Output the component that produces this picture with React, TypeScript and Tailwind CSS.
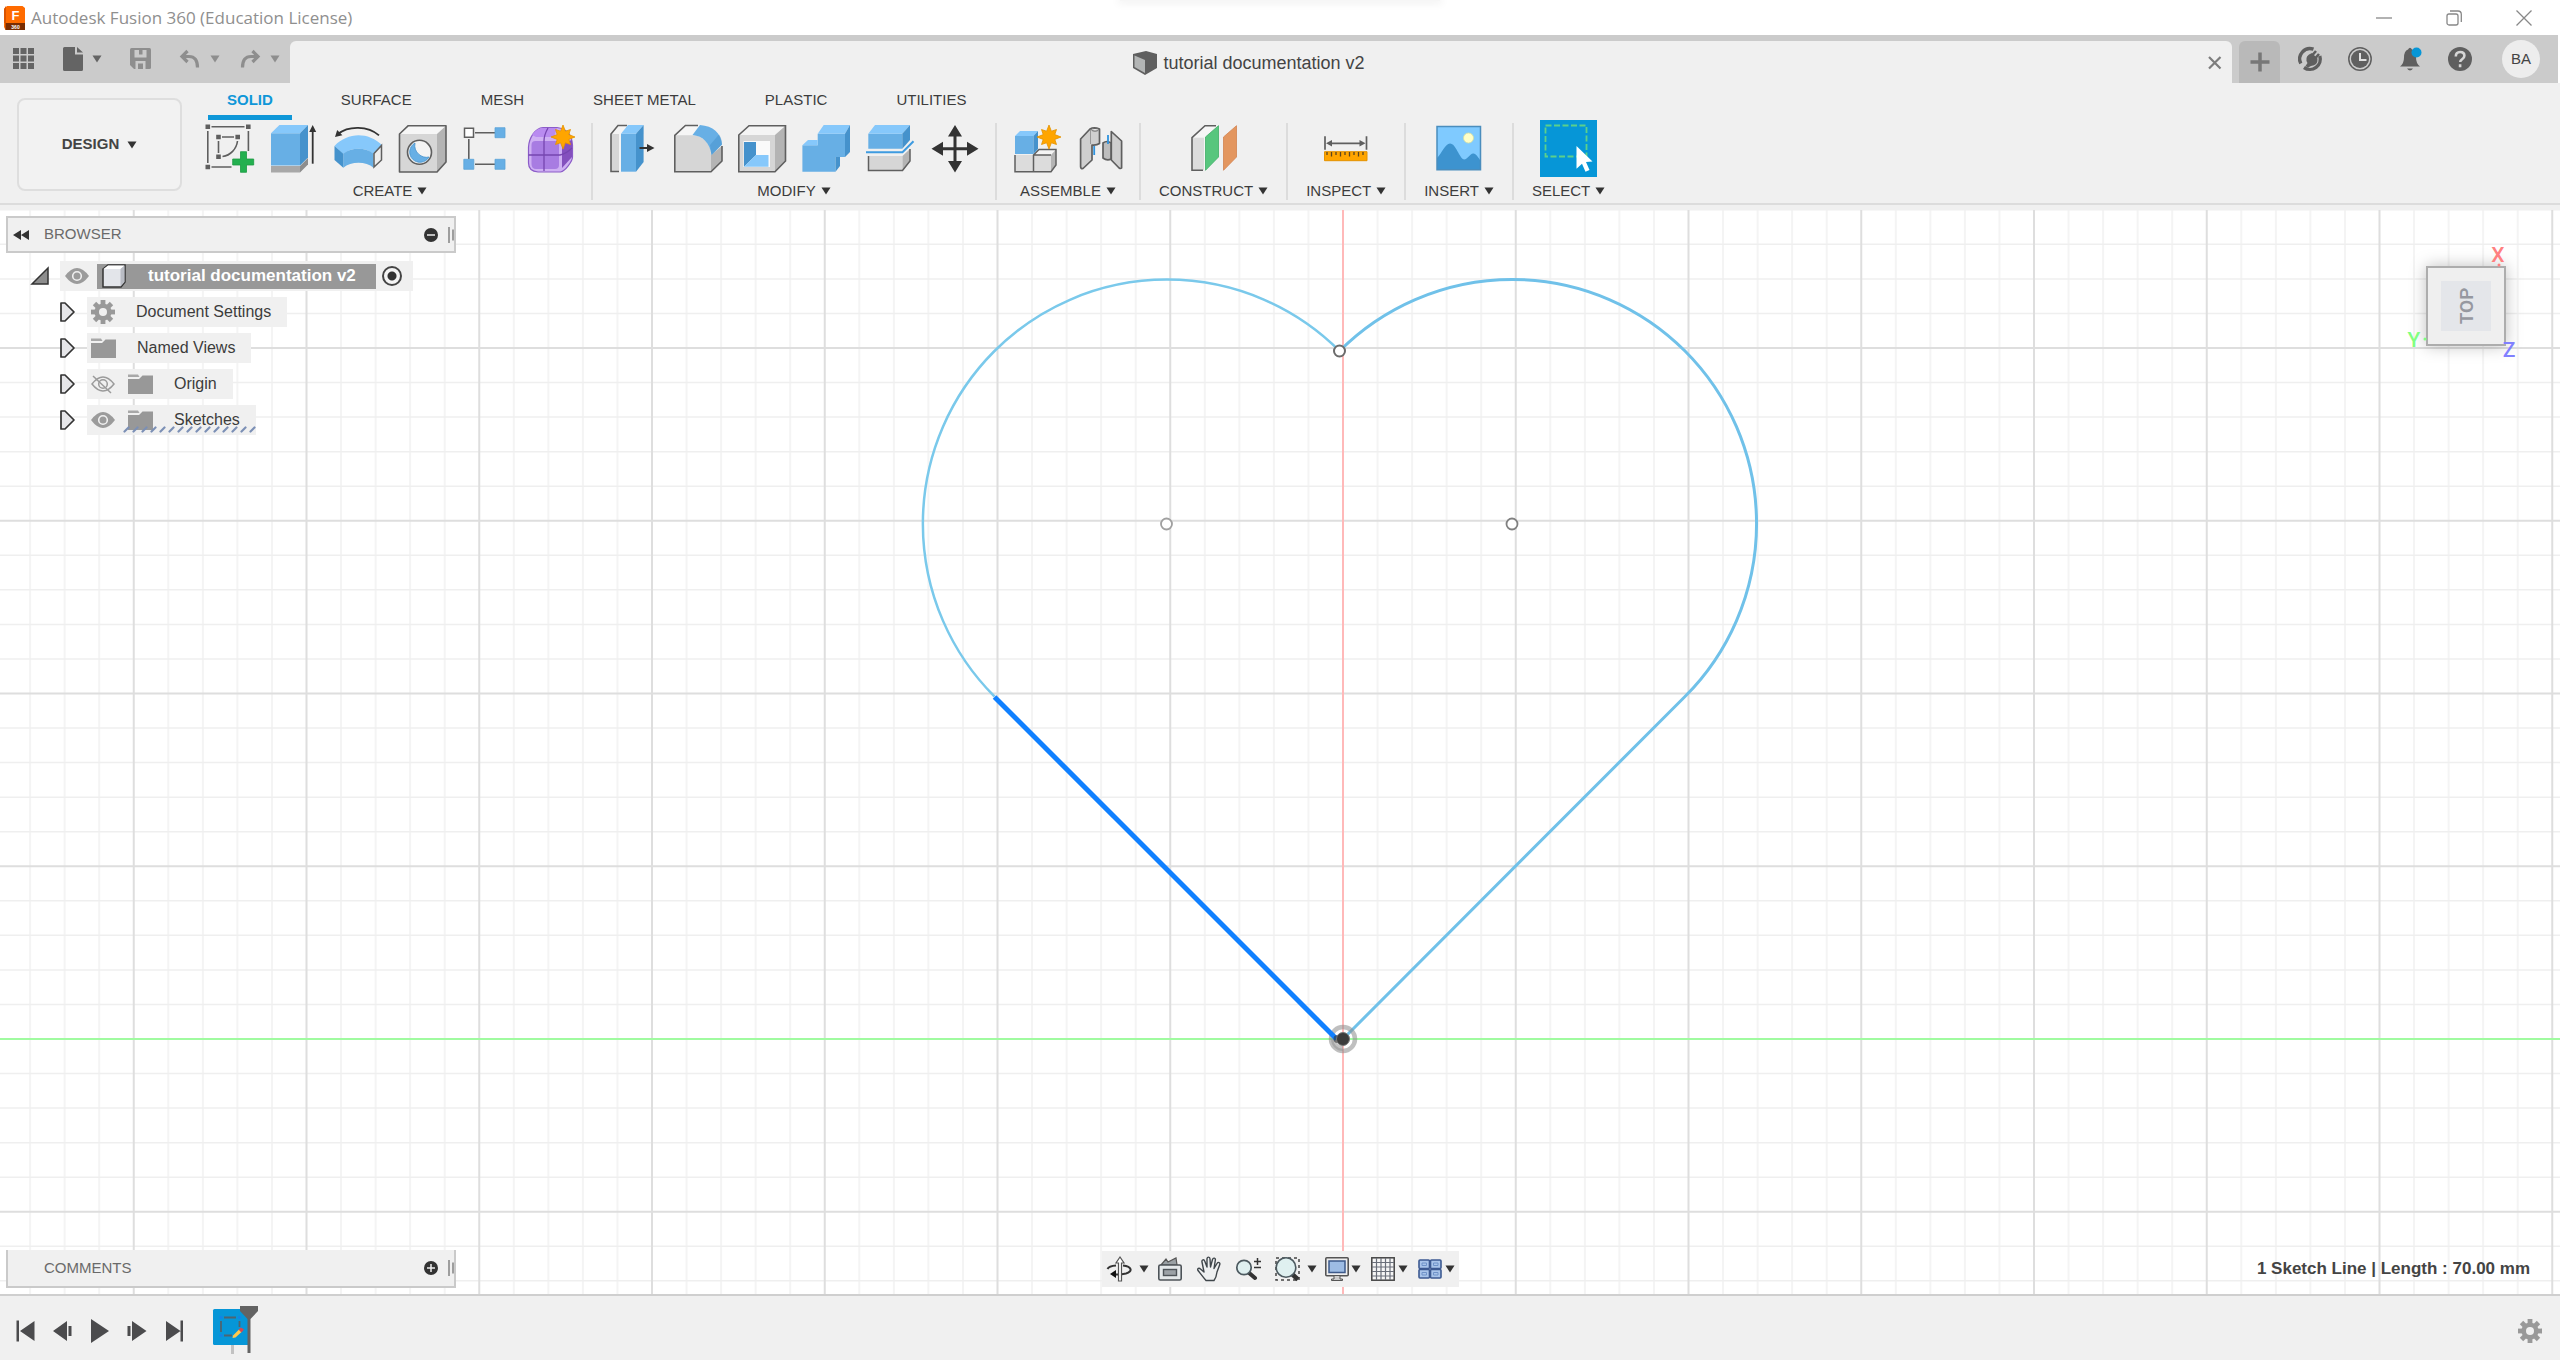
import React from "react";

type Kids = { children?: React.ReactNode };

const Icon = ({ w = 48, h = 48, children }: Kids & { w?: number; h?: number }) => (
  <svg width={w} height={h} viewBox={`0 0 ${w} ${h}`} fill="none" className="shrink-0 overflow-visible" aria-hidden="true">
    {children}
  </svg>
);

const Caret = ({ color = "#333" }: { color?: string }) => (
  <Icon w={10} h={8}>
    <path d="M0.5 0.5h9L5 7.5z" fill={color} />
  </Icon>
);

const G = "#5f5f5f";
const BLUE = "#67afe5";
const LBLUE = "#86c8fb";
const DBLUE = "#4592cc";

const starPoints = (cx: number, cy: number, r: number) =>
  Array.from({ length: 16 }, (_, i) => {
    const a = (i * Math.PI) / 8 - Math.PI / 2;
    const q = i % 2 ? r * 0.52 : i % 4 ? r * 0.88 : r;
    return `${(cx + q * Math.cos(a)).toFixed(1)},${(cy + q * Math.sin(a)).toFixed(1)}`;
  }).join(" ");

const Star = ({ x, y }: { x: number; y: number }) => <polygon points={starPoints(x, y, 12)} fill="#ffa500" stroke="#e39200" strokeWidth="0.8" />;

const Gear = () => (
  <Icon w={24} h={24}>
    <g fill="#999">
      {[0, 45, 90, 135].map((a) => (
        <path key={a} d="M9.6 0h4.8v24H9.6z" transform={`rotate(${a} 12 12)`} />
      ))}
      <circle cx="12" cy="12" r="8.6" />
    </g>
    <circle cx="12" cy="12" r="4" fill="#f0f0f0" />
  </Icon>
);

const SketchIcon = () => (
  <Icon>
    <g stroke={G} strokeWidth="1.6">
      <path d="M5.500 1.700h33M1.800 6v32M42.400 6v20M5.500 42h20M16 12h12M12.500 16v12M31.500 16c-1 8-7 14.500-15 15.500" />
    </g>
    <g fill={G}>
      <path d="M-.5-.6h4.600v4.600H-.5zM40-.6h4.600v4.600H40zM-.5 39.700h4.600v4.600H-.5zM10.200 9.700h4.600v4.600h-4.600zM29.400 9.700h4.600v4.600h-4.600zM10.200 29.400h4.600V34h-4.600z" />
    </g>
    <path d="M34.500 26.700h6v7.300h7.200v6h-7.200v7.300h-6V40h-7.800v-6h7.800z" fill="#23b04f" stroke="#1c9a43" strokeWidth=".8" />
  </Icon>
);

const ExtrudeIcon = () => (
  <Icon>
    <path d="M1 41h29v6.500H1z" fill="#a8a8a8" />
    <path d="M30 41l8-8v6.500l-8 8z" fill="#8d8d8d" />
    <path d="M1 8.300h29v32.200H1z" fill={BLUE} />
    <path d="M1 8.300L9.400 0H38l-8 8.300z" fill={LBLUE} />
    <path d="M30 8.300L38 0v32.500l-8 8z" fill={DBLUE} />
    <path d="M42.700 5v33.700" stroke="#333" strokeWidth="1.800" />
    <path d="M42.700 0l3.500 7h-7z" fill="#333" />
  </Icon>
);

const RevolveIcon = () => (
  <Icon>
    <path d="M4 9C14 .5 34 .5 45 10.300" stroke="#333" strokeWidth="1.800" />
    <path d="M1 12l2.200-7 5.200 5.200z" fill="#333" />
    <path d="M.5 21C14 7 34 7 48 20l-8.500 9C32 22 17 22 9.300 29z" fill={LBLUE} />
    <path d="M9.300 28.700C17 22 32 22 39.500 28.700v14C32 36 17 36 9.300 42.700z" fill={BLUE} />
    <path d="M.5 21l8.800 7.700v14L.5 35z" fill={DBLUE} />
    <path d="M40 28.500l7.500-8v14.500L40 42z" fill="#eee" stroke={G} strokeWidth="1.500" />
  </Icon>
);

const HoleIcon = () => (
  <Icon>
    <path d="M1.500 9l8.800-8.300H48L39 9z" fill="#f6f6f6" />
    <path d="M39 9l9-8.300V37l-9 10z" fill="#b4b4b4" />
    <path d="M1.500 9H39v38H1.500z" fill="#d6d6d6" />
    <path d="M1.500 9l8.800-8.300H48V37l-9 10H1.500z" stroke={G} strokeWidth="1.600" strokeLinejoin="round" />
    <circle cx="21.500" cy="27.300" r="12" fill="#f4f4f4" stroke={G} strokeWidth="1.600" />
    <path d="M17 18a10.300 10.300 0 1 0 14 14C24 34 15 27 17 18z" fill={BLUE} stroke={DBLUE} strokeWidth=".8" />
  </Icon>
);

const PatternIcon = () => (
  <Icon>
    <path d="M13 7.700h20M6.800 14v20M13 39.300h20" stroke={G} strokeWidth="1.600" />
    <path d="M2.500 3.200h9v9h-9z" fill="#fff" stroke={G} strokeWidth="1.500" />
    <path d="M33 2.700h10v10H33zM1.800 34.300h10v10h-10zM33 34.300h10v10H33z" fill={BLUE} stroke="#5ca3d8" strokeWidth=".8" />
  </Icon>
);

const FormIcon = () => (
  <Icon>
    <path d="M2.500 22C3 13 9 3 17 2.500h14C42 4 46 10 46.500 20v12c0 4-7 14-12 15H12C6 46.500 2.500 44 2.500 38z" fill="#cfb0f3" stroke="#8b5cc8" strokeWidth="1.200" />
    <path d="M36 18l10-3v17l-10 11z" fill="#8450be" />
    <path d="M6 10C10 4 14 3 18 3h13l-3 9H10z" fill="#b98bf0" />
    <path d="M5.500 20q0-4 4-4H29q4 0 4 4v20q0 4-4 4H10q-4.500 0-4.500-5z" fill="#a87ce2" />
    <path d="M2.500 30H34q6-1 12-7M18 46V16q0-6 4-13" stroke="#7645b0" strokeWidth="1.300" />
    <Star x={37} y={12} />
  </Icon>
);

const PressPullIcon = () => (
  <Icon>
    <path d="M1 9l7-8.500h10L11 9v37.500H1z" fill="#f4f4f4" />
    <path d="M1 9h8v37.500H1z" fill="#d6d6d6" />
    <path d="M17 .5H8L1 9v37.500h8" stroke={G} strokeWidth="1.600" />
    <path d="M11 8.700h15v38H11z" fill={BLUE} />
    <path d="M11 8.700L18 0h15.600L26 8.700z" fill={LBLUE} />
    <path d="M26 8.700L33.600 0v37L26 46.700z" fill={DBLUE} />
    <path d="M29.500 23H38" stroke="#333" strokeWidth="2" />
    <path d="M37 19l7.500 4-7.500 4z" fill="#333" />
  </Icon>
);

const FilletIcon = () => (
  <Icon>
    <path d="M.8 10.300L11.400.5H25l-6.500 9.800z" fill="#f6f6f6" />
    <path d="M.8 10.300h17.700C30 11 37 19 37 30v16.700H.8z" fill="#d6d6d6" />
    <path d="M37 30l11-9v15L37 46.700z" fill="#b4b4b4" />
    <path d="M24 .5H11.400L.8 10.300v36.400H37L48 36V21" stroke={G} strokeWidth="1.600" />
    <path d="M18.500 10L26 0c13 1 21 8 22 19.500L37.500 30C36 18 29 11 18.500 10z" fill={BLUE} />
    <path d="M37.500 30L48 19.500c0-4-1-7-3-10L36 20z" fill={DBLUE} opacity=".5" />
  </Icon>
);

const ShellIcon = () => (
  <Icon>
    <path d="M.8 10L11 .7h36.500L37 10z" fill="#f4f4f4" />
    <path d="M37 10L47.500.7V36L37 46.700z" fill="#b4b4b4" />
    <path d="M.8 10H37v36.700H.8z" fill="#d6d6d6" />
    <path d="M.8 10L11 .7h36.500V36L37 46.700H.8z" stroke={G} strokeWidth="1.600" />
    <path d="M5.500 16H32v26H5.500z" fill="#fafafa" />
    <path d="M6 17h12v13L6 41.700z" fill={DBLUE} />
    <path d="M6 41.700L18 30h12.500v11.700z" fill={LBLUE} />
  </Icon>
);

const CombineIcon = () => (
  <Icon>
    <path d="M15.700 8.700H43V32H33.500v14.700H.4V20.300h15.300z" fill={BLUE} />
    <path d="M15.700 8.700l6-8.700H48l-5 8.700zM.4 20.300L6 15h9.700v5.300z" fill={LBLUE} />
    <path d="M43 8.700L48 0v27l-5 5zM33.500 32H38v9l-4.500 5.700z" fill={DBLUE} />
  </Icon>
);

const SplitIcon = () => (
  <Icon>
    <path d="M2.300 8.700h34v15h-34z" fill={BLUE} />
    <path d="M2.300 8.700L9 0h35l-7.700 8.700z" fill={LBLUE} />
    <path d="M36.300 8.700L44 0v15l-7.700 8.700z" fill={DBLUE} />
    <path d="M0 27.300h36.500l11-11" stroke="#3e9be0" strokeWidth="2" />
    <path d="M2.500 31h34v14.500h-34z" fill="#d6d6d6" />
    <path d="M36.500 31l7.500-7v12l-7.500 9.500z" fill="#b4b4b4" />
    <path d="M2.500 31v14.500h34L44 36V24" stroke={G} strokeWidth="1.500" />
  </Icon>
);

const MoveIcon = () => (
  <Icon>
    <path d="M25 8v32M10 23.700h30" stroke="#333" strokeWidth="3" />
    <path d="M25 0l7 11.500H18zM25 47.500L18 36h14zM1.500 23.700L13 16.700v14zM48.500 23.700L37 16.700v14z" fill="#333" />
  </Icon>
);

const ComponentIcon = () => (
  <Icon>
    <path d="M1 30h18.500v16.700H1zM19.500 30H37v16.700H19.500z" fill="#dcdcdc" />
    <path d="M19.500 30l5.500-5.500h17L37 30z" fill="#f4f4f4" />
    <path d="M37 30l5-5.500V40l-5 6.700z" fill="#b4b4b4" />
    <path d="M1 30v16.700h36l5-6.700V24.500H25L19.500 30v16.700M19.500 30H37" stroke={G} strokeWidth="1.500" />
    <path d="M1 11h18.500v18H1z" fill={BLUE} />
    <path d="M1 11l5-5h18l-4.500 5z" fill={LBLUE} />
    <path d="M19.500 11L24 6v18l-4.500 5z" fill={DBLUE} />
    <Star x={35} y={12} />
  </Icon>
);

const JointIcon = () => (
  <Icon w={44}>
    <g stroke={G} strokeWidth="1.700" strokeLinejoin="round">
      <path d="M2.600 14L12 4q4-2.500 9.500 0v14.500q-3 2-7.500 1.500V35L5 43.500q-2.400.5-2.400-2z" fill="#cfcfcf" />
      <path d="M12.500 5v14" stroke="#999" strokeWidth="1" />
      <path d="M33.300 6.500l10.300 9.500v27q-1 1-2.500 0l-7.800-8z" fill="#cfcfcf" />
      <path d="M25 18q4-3 8 0v16q-4 2-8-1z" fill="#bdbdbd" />
      <ellipse cx="17" cy="4.800" rx="3.500" ry="1.300" fill="#eee" strokeWidth="1" />
    </g>
    <path d="M16.200 21v9M30 10v9" stroke="#2f93de" strokeWidth="1.800" />
  </Icon>
);

const ConstructIcon = () => (
  <Icon>
    <path d="M2 12.700L15 .7h12l-12 11v33.600H2z" fill="#f6f6f6" />
    <path d="M2 12.700h12v32.600H2z" fill="#dcdcdc" />
    <path d="M26 .7H15L2 12.700v32.600h11" stroke={G} strokeWidth="1.600" />
    <path d="M15.500 12L28.500.7V32l-13 13.300z" fill="#57c67d" stroke="#3fae66" strokeWidth=".8" />
    <path d="M33.500 12L46.500.7V32l-13 13.300z" fill="#e3965f" stroke="#d28350" strokeWidth=".8" />
  </Icon>
);

const InspectIcon = () => (
  <Icon>
    <path d="M3 11.300v13.400M44.500 11.300v13.400M8 18.300h32" stroke={G} strokeWidth="1.700" />
    <path d="M4 18.300l6-3.300v6.600zM43.500 18.300l-6-3.300v6.600z" fill={G} />
    <path d="M2.500 26.700h42.500v9H2.500z" fill="#ffa500" stroke="#e39200" />
    <path d="M5 27v3M9.500 27v4.500M14 27v3M18.500 27v4.500M23 27v3M27.500 27v4.500M32 27v3M36.500 27v4.500M41 27v3" stroke="#5a4520" strokeWidth="1.300" />
  </Icon>
);

const InsertIcon = () => (
  <Icon>
    <path d="M2 1.500h43.500v43.200H2z" fill="#7fcaff" />
    <circle cx="33.500" cy="13" r="5" fill="#ffffc8" stroke="#d8e0a0" strokeWidth=".8" />
    <path d="M2 33c5-5 8-14 13-14.500 6 0 9 14.500 14 16 4 0 6-6.500 9.500-6 2.500 0 5 4.500 7 7v9.200H2z" fill="#3d93cf" />
    <path d="M2 1.500h43.500v43.200H2z" stroke="#4a8dbd" strokeWidth="1.500" />
  </Icon>
);

const SelectIcon = () => (
  <span className="bg-[#0696d7]">
    <Icon w={57} h={57}>
      <path d="M5.500 5.500h41v31h-41z" stroke="#5cd08a" strokeWidth="1.800" strokeDasharray="6 2.500" />
      <path d="M36.500 26l16 15.500-6.500.5 3.500 8-4 1.800-3.500-8-5.500 5z" fill="#fff" />
    </Icon>
  </span>
);

const groups: { label: string; icons: [string, React.ReactNode][] }[] = [
  {
    label: "CREATE",
    icons: [
      ["Create Sketch", <SketchIcon />],
      ["Extrude", <ExtrudeIcon />],
      ["Revolve", <RevolveIcon />],
      ["Hole", <HoleIcon />],
      ["Rectangular Pattern", <PatternIcon />],
      ["Create Form", <FormIcon />],
    ],
  },
  {
    label: "MODIFY",
    icons: [
      ["Press Pull", <PressPullIcon />],
      ["Fillet", <FilletIcon />],
      ["Shell", <ShellIcon />],
      ["Combine", <CombineIcon />],
      ["Split Body", <SplitIcon />],
      ["Move", <MoveIcon />],
    ],
  },
  { label: "ASSEMBLE", icons: [["New Component", <ComponentIcon />], ["Joint", <JointIcon />]] },
  { label: "CONSTRUCT", icons: [["Offset Plane", <ConstructIcon />]] },
  { label: "INSPECT", icons: [["Measure", <InspectIcon />]] },
  { label: "INSERT", icons: [["Insert Image", <InsertIcon />]] },
  { label: "SELECT", icons: [["Select", <SelectIcon />]] },
];

const tabs = ["SOLID", "SURFACE", "MESH", "SHEET METAL", "PLASTIC", "UTILITIES"];

function TitleBar() {
  return (
    <header className="relative flex h-[35px] items-center bg-white pl-1 pr-7">
      <div className="absolute left-1/2 top-0 h-px w-[320px] -translate-x-1/2 bg-[#f6f6f6] shadow-[0_0_8px_2px_rgba(0,0,0,0.08)]" />
      <Icon w={21} h={24}>
        <path d="M3 0h15.500L21 2v18L18 24H1.500L0 21V3z" fill="#ff6b00" />
        <path d="M0 3l2-3v17H0z" fill="#d95400" />
        <path d="M1.500 17H21v7H1.500z" fill="#7a2c00" />
        <text x="11.500" y="13.500" fontSize="13" fontWeight="700" textAnchor="middle" fill="#fff" fontFamily="Liberation Sans, sans-serif">F</text>
        <text x="11.500" y="22.500" fontSize="5" fontWeight="700" textAnchor="middle" fill="#fff" fontFamily="Liberation Sans, sans-serif">360</text>
      </Icon>
      <span className="ml-1.5 font-['Open_Sans',sans-serif] text-[17px] leading-6 text-[#8f8f8f]">Autodesk Fusion 360 (Education License)</span>
      <div className="ml-auto flex items-center gap-[54px]">
        <button aria-label="Minimize">
          <Icon w={16} h={16}><path d="M0 8h16" stroke="#888" strokeWidth="1.300" /></Icon>
        </button>
        <button aria-label="Restore">
          <Icon w={16} h={16}>
            <rect x="1" y="4" width="11" height="11" rx="2" stroke="#888" strokeWidth="1.300" />
            <path d="M4 1h8q3.300 0 3.300 3.300V12" stroke="#888" strokeWidth="1.300" />
          </Icon>
        </button>
        <button aria-label="Close">
          <Icon w={16} h={16}><path d="M.5.5l15 15M15.500.5l-15 15" stroke="#888" strokeWidth="1.300" /></Icon>
        </button>
      </div>
    </header>
  );
}

function DocumentBar() {
  return (
    <div className="flex h-12 items-end border-r-2 border-white bg-[#cbcbcb]">
      <div className="flex h-[42px] w-[290px] shrink-0 items-center pb-1.5 pl-[13px]">
        <button aria-label="Data panel">
          <Icon w={22} h={22}>
            <path d="M0 0h6v6H0zM7.500 0h6v6h-6zM15 0h6v6h-6zM0 7.500h6v6H0zM7.500 7.500h6v6h-6zM15 7.500h6v6h-6zM0 15h6v6H0zM7.500 15h6v6h-6zM15 15h6v6h-6z" fill="#646464" />
          </Icon>
        </button>
        <button aria-label="File" className="ml-7 flex items-center gap-[9px]">
          <Icon w={20} h={24}><path d="M0 1.500Q0 0 1.500 0H12v7.500h8v15q0 1.500-1.500 1.500h-17Q0 24 0 22.500zM14 0l6 5.500h-6z" fill="#646464" /></Icon>
          <Caret color="#646464" />
        </button>
        <button aria-label="Save" className="ml-7">
          <Icon w={22} h={22}>
            <path d="M0 1.500Q0 0 1.500 0h18Q21 0 21 1.500v18q0 1.500-1.500 1.500H4L0 17z" fill="#8e8e8e" />
            <path d="M4.500 2h12v7.500h-12zM5.500 13h10v8h-10z" fill="#cbcbcb" />
            <path d="M9 2h3.500v4.500H9zM8 15.500h5V21H8z" fill="#8e8e8e" />
          </Icon>
        </button>
        <button aria-label="Undo" className="ml-7 flex items-center gap-[10px]">
          <Icon w={20} h={20}><path d="M7.500 2L2 7.500 7.500 13M2 7.500h7q8.500 0 8.500 11" stroke="#8e8e8e" strokeWidth="3.200" /></Icon>
          <Caret color="#8e8e8e" />
        </button>
        <button aria-label="Redo" className="ml-5 flex items-center gap-[10px]">
          <Icon w={20} h={20}><path d="M12.500 2L18 7.500 12.500 13M18 7.500h-7q-8.500 0-8.500 11" stroke="#8e8e8e" strokeWidth="3.200" /></Icon>
          <Caret color="#8e8e8e" />
        </button>
      </div>
      <div className="flex h-[42px] flex-1 items-center rounded-t-md bg-[#f0f0f0] pr-2.5 pt-px">
        <div className="flex flex-1 items-center justify-center gap-1.5">
          <Icon w={24} h={24}>
            <path d="M0 3L13 0l11 3v14l-12 7L0 17z" fill="#5f5f5f" />
            <path d="M1.500 4.500L12 9v13L1.500 16z" fill="#b3b5b5" />
          </Icon>
          <span className="text-[18px] leading-6 text-[#444]">tutorial documentation v2</span>
        </div>
        <button aria-label="Close document">
          <Icon w={14} h={14}><path d="M1 1l11.500 11.500M12.500 1L1 12.500" stroke="#7d7d7d" strokeWidth="2.200" /></Icon>
        </button>
      </div>
      <button aria-label="New document" className="ml-[7px] flex h-[42px] w-[41px] items-center justify-center rounded-t-md bg-[#b9b9b9]">
        <Icon w={20} h={20}><path d="M10 .5v19M.5 10h19" stroke="#777" strokeWidth="3.500" /></Icon>
      </button>
      <div className="flex h-[48px] items-center gap-[26px] pl-[18px] pr-[18px]">
        <button aria-label="Extensions">
          <Icon w={24} h={24}>
            <path d="M15.500 2.200A10.300 10.300 0 0 0 2.800 16.500M6 20.500A10.300 10.300 0 0 0 21.800 9" stroke="#5f5f5f" strokeWidth="3.400" />
            <path d="M7.500 19l2-3q-3-5 1.500-8.500l3-1.500 5.500 5.500q.5 7-6.500 7.500l-3 1.500z" fill="#5f5f5f" />
            <path d="M14.500 8l3.500-4M17.500 11l3.500-4" stroke="#5f5f5f" strokeWidth="2.600" />
          </Icon>
        </button>
        <button aria-label="Job status">
          <Icon w={24} h={24}>
            <circle cx="12" cy="12" r="11.200" stroke="#5f5f5f" strokeWidth="1.500" />
            <circle cx="12" cy="12" r="9" fill="#5f5f5f" />
            <path d="M12 6v7h6.500" stroke="#e0e0e0" strokeWidth="2" />
          </Icon>
        </button>
        <button aria-label="Notifications">
          <Icon w={24} h={24}>
            <path d="M2 19.500q4-3 4-9Q6 4 10 2.500q2-3.500 4 0 4 1.500 4 8 0 6 4 9zM9 21.500h6q-3 4-6 0z" fill="#5f5f5f" />
            <circle cx="18.500" cy="5.500" r="5" fill="#0696d7" />
          </Icon>
        </button>
        <button aria-label="Help">
          <Icon w={24} h={24}>
            <circle cx="12" cy="12" r="12" fill="#5f5f5f" />
            <path d="M7.800 9.500q0-4.500 4.300-4.500t4.300 3.800q0 2.200-2.400 3.500-1.800 1-1.800 2.700M12.100 17.200v3" stroke="#d6d6d6" strokeWidth="2.600" />
          </Icon>
        </button>
        <button className="ml-1 flex size-[38px] items-center justify-center rounded-full bg-[#ededed] text-[15px] text-[#444]">BA</button>
      </div>
    </div>
  );
}

function Ribbon() {
  return (
    <div className="flex border-b-[5px] border-[#f0f0f0] bg-[#f0f0f0]">
      <div className="flex flex-1 border-b-2 border-[#dcdcdc] pb-px">
        <button className="ml-[17px] mt-[15px] flex h-[93px] w-[165px] shrink-0 items-center justify-center gap-2 rounded-lg border-2 border-[#dedede] bg-[#f2f2f2] text-[15px] font-bold text-[#444]">
          DESIGN <Caret />
        </button>
        <div className="ml-[7px] flex flex-col">
          <div role="tablist" className="flex h-[37px] gap-[29px] pl-[19px]">
            {tabs.map((t, i) => (
              <button
                key={t}
                role="tab"
                aria-selected={i === 0}
                className={
                  i === 0
                    ? "border-b-[5px] border-[#0f97d8] px-[19px] pt-0.5 text-[15px] font-bold text-[#0f97d8]"
                    : "border-b-[5px] border-transparent px-5 pt-0.5 text-[15px] text-[#3c3c3c]"
                }
              >
                {t}
              </button>
            ))}
          </div>
          <div className="flex">
            {groups.map((g, i) => (
              <div key={g.label} className="flex">
                <div className="flex flex-col items-center px-[17px]">
                  <div className="flex h-[57px] items-center gap-4">
                    {g.icons.map(([name, icon]) => (
                      <button key={name} aria-label={name} className="flex">
                        {icon}
                      </button>
                    ))}
                  </div>
                  <button className="mt-[3px] flex items-center gap-[5px] px-px text-[15px] leading-[22px] text-[#3c3c3c]">
                    {g.label} <Caret />
                  </button>
                </div>
                {i < groups.length - 1 && <div className="mt-[3px] h-[77px] w-0.5 bg-[#dcdcdc]" />}
              </div>
            ))}
          </div>
        </div>
      </div>
    </div>
  );
}

const PITCH = 34.55;
const cols = Array.from({ length: 75 }, (_, k) => k - 38);
const rows = Array.from({ length: 32 }, (_, k) => k - 24);

function Sketch() {
  return (
    <svg viewBox="0 0 2560 1084" preserveAspectRatio="xMidYMid slice" className="absolute inset-0 size-full" fill="none" role="img" aria-label="Sketch canvas">
      <g stroke="#f4f4f4" strokeWidth="2">
        {cols.map((k) => k % 5 !== 0 && <path key={k} d={`M${1343 + k * PITCH} 0V1084`} />)}
      </g>
      <g stroke="#efefef" strokeWidth="1.500">
        {rows.map((k) => k % 5 !== 0 && <path key={k} d={`M0 ${829 + k * PITCH}H2560`} />)}
      </g>
      <g stroke="#dedede" strokeWidth="2">
        {cols.map((k) => k % 5 === 0 && k !== 0 && <path key={k} d={`M${1343 + k * PITCH} 0V1084`} />)}
        {rows.map((k) => k % 5 === 0 && k !== 0 && <path key={k} d={`M0 ${829 + k * PITCH}H2560`} />)}
      </g>
      <path d="M0 829H2560" stroke="#a0fba0" strokeWidth="2" />
      <path d="M1343 0V1084" stroke="#ffb9b9" strokeWidth="2" />
      <path d="M1339.500 141A244 244 0 1 0 994.500 486.500" stroke="#7ac9eb" strokeWidth="2.500" />
      <path d="M1339.500 141A244 244 0 1 1 1685 486.500L1343 829" stroke="#70c1e9" strokeWidth="3" />
      <circle cx="1343" cy="829" r="12" stroke="#8a8a8a" strokeOpacity=".55" strokeWidth="4.500" />
      <path d="M1331 829a12 12 0 0 0 12 12v-5a7 7 0 0 1-7-7z" fill="#999" fillOpacity=".6" />
      <path d="M994.500 487L1336.500 829" stroke="#1080ff" strokeWidth="5" />
      <circle cx="1337.500" cy="829" r="4" fill="#333" fillOpacity=".6" />
      <circle cx="1343" cy="829" r="6.500" fill="#3c3c3c" stroke="#777" />
      <circle cx="1339.500" cy="141" r="5.500" fill="#fff" stroke="#6b6b6b" strokeWidth="2" />
      <circle cx="1166.500" cy="314" r="5.500" fill="#fff" stroke="#a0a0a0" strokeWidth="1.800" />
      <circle cx="1512" cy="314" r="5.500" fill="#fff" stroke="#808080" strokeWidth="1.800" />
    </svg>
  );
}

function ViewCube() {
  return (
    <button aria-label="View cube, top" className="absolute right-[40px] top-[30px]">
      <svg width="120" height="124" viewBox="0 0 120 124" fontFamily="Roboto, sans-serif" className="block overflow-visible">
        <rect x="27" y="27" width="78" height="78" className="drop-shadow-[0_0_8px_rgba(0,0,0,0.25)]" fill="#efefef" stroke="#adadad" strokeWidth="2" />
        <rect x="41" y="41" width="50" height="50" fill="#e4e6ea" />
        <text transform="translate(73 66) rotate(-90)" fontSize="19" fontWeight="600" textAnchor="middle" fill="#9698a0">TOP</text>
        <g fontSize="21" textAnchor="middle" fontWeight="500">
          <text x="98" y="22" fill="#ff8080">X</text>
          <text x="14" y="107" fill="#80ff80">Y</text>
          <text x="109" y="117" fill="#8080ff">Z</text>
        </g>
        <circle cx="99" cy="25" r="1.500" fill="#ff8080" />
        <circle cx="25" cy="99" r="1.500" fill="#80ff80" />
      </svg>
    </button>
  );
}

const Eye = () => (
  <Icon w={24} h={16}>
    <path d="M0 8Q12-8 24 8 12 24 0 8z" fill="#9b9b9b" />
    <circle cx="12" cy="8" r="4.300" stroke="#f0f0f0" strokeWidth="1.600" />
  </Icon>
);

const EyeOff = () => (
  <Icon w={24} h={16}>
    <path d="M1 8Q12-6 23 8 12 22 1 8z" stroke="#9b9b9b" strokeWidth="1.500" />
    <circle cx="12" cy="8" r="4.300" stroke="#9b9b9b" strokeWidth="1.500" />
    <path d="M2 0l18 17" stroke="#9b9b9b" strokeWidth="1.500" />
  </Icon>
);

const Folder = () => (
  <Icon w={25} h={20}>
    <path d="M0 .5h10l1.500 2.500H0z" fill="#a8a8a8" />
    <path d="M0 5h11l3.500-3.500H25V20H0z" fill="#989898" />
  </Icon>
);

const Expander = () => (
  <Icon w={15} h={20}>
    <path d="M1 1h4l9 9-9 9H1z" fill="#e6e6e9" stroke="#333" strokeWidth="1.700" strokeLinejoin="round" />
  </Icon>
);

const Handle = () => (
  <Icon w={6} h={16}>
    <path d="M1 0v16" stroke="#8a8a8a" strokeWidth="1.600" />
    <path d="M5 2.500v11" stroke="#8a8a8a" strokeWidth="1.600" />
  </Icon>
);

const nodes: { label: string; icons: React.ReactNode[]; hatched?: boolean }[] = [
  { label: "Document Settings", icons: [<Gear />] },
  { label: "Named Views", icons: [<Folder />] },
  { label: "Origin", icons: [<EyeOff />, <Folder />] },
  { label: "Sketches", icons: [<Eye />, <Folder />], hatched: true },
];

function Browser() {
  return (
    <aside className="relative ml-1.5 mt-1.5 w-[450px]">
      <div className="flex h-[37px] items-center border-2 border-[#cacaca] bg-[#f0f0f0] pl-[5px]">
        <button aria-label="Collapse browser">
          <Icon w={16} h={10}><path d="M8 0v10L0 5zM16 0v10L8 5z" fill="#333" /></Icon>
        </button>
        <h2 className="ml-[15px] text-[15px] text-[#6a6a6a]">BROWSER</h2>
        <button aria-label="Minimize browser" className="ml-auto mr-2.5">
          <Icon w={14} h={14}><circle cx="7" cy="7" r="7" fill="#333" /><path d="M3 7h8" stroke="#eee" strokeWidth="1.500" /></Icon>
        </button>
        <Handle />
      </div>
      <ul className="mt-2 flex flex-col gap-1.5">
        <li className="flex items-center pl-[25px]">
          <button aria-label="Collapse">
            <Icon w={18} h={18}><path d="M17 1v16H1z" fill="#8d8d8d" stroke="#333" strokeWidth="1.500" /></Icon>
          </button>
          <div className="ml-[11px] flex h-[30px] items-center bg-[#f0f0f0] pl-[5px] pr-[11px]">
            <button aria-label="Toggle visibility"><Eye /></button>
            <button className="ml-2 flex h-[25px] items-center bg-[#989898] pl-[5px] pr-5 text-[17px] font-bold text-white">
              <Icon w={24} h={24}>
                <path d="M1 5l5-4h17v17l-4 5H1z" fill="#e3e5ea" stroke="#333" strokeWidth="1.500" />
                <path d="M1.500 5L6 1.500h16.500L18.500 5z" fill="#fff" />
                <path d="M18.500 5l4-3.500V18l-4 4.500z" fill="#b9bcc4" />
              </Icon>
              <span className="ml-[22px]">tutorial documentation v2</span>
            </button>
            <label className="ml-1.5 flex">
              <input type="radio" name="active" defaultChecked aria-label="Activate component" className="size-5 appearance-none rounded-full border-2 border-[#444] bg-[radial-gradient(circle,#333_0_4px,#f4f4f4_5px)]" />
            </label>
          </div>
        </li>
        {nodes.map((n) => (
          <li key={n.label} className="flex items-center pl-[54px]">
            <button aria-label={`Expand ${n.label}`}><Expander /></button>
            <div className="relative ml-3 flex h-[30px] items-center gap-[13px] bg-[#f0f0f0] pl-1 pr-4">
              {n.icons.map((ic, i) => <React.Fragment key={i}>{ic}</React.Fragment>)}
              <span className="ml-2 text-[16px] text-[#3c3c3c]">{n.label}</span>
              {n.hatched && (
                <svg className="absolute bottom-0.5 left-[36px]" width="134" height="7" viewBox="0 0 134 7" aria-hidden="true">
                  {Array.from({ length: 15 }, (_, i) => (
                    <path key={i} d={`M${1.5 + i * 9} 5.500l4-4`} stroke="#7b8fb5" strokeWidth="2.200" strokeLinecap="round" />
                  ))}
                </svg>
              )}
            </div>
          </li>
        ))}
      </ul>
    </aside>
  );
}

function NavBar() {
  return (
    <nav aria-label="Navigation" className="flex h-9 items-center bg-[#f0f0f0] pl-[5px] pr-1">
      <button aria-label="Orbit" className="flex items-center gap-2">
        <Icon w={24} h={24}>
          <path d="M16 8.500c9 1 10 6 3 8-4 1-9 1.300-13 .7M9 8.500Q2 9 .5 12" stroke="#333" strokeWidth="2" />
          <path d="M3 17l6-4v8z" fill="#111" />
          <path d="M11.500 24V6H9l4-6 4 6h-2.500v18z" fill="#fff" stroke="#555" strokeWidth="1.200" />
        </Icon>
        <Caret />
      </button>
      <button aria-label="Look at" className="ml-[9px]">
        <Icon w={24} h={24}>
          <path d="M3 8l5-6 2 3 8-4 1 7z" fill="#9aa0a4" stroke="#555" strokeWidth="1.200" />
          <rect x=".8" y="8" width="22.400" height="15" rx="1.500" fill="#e4e8ea" stroke="#4d5358" strokeWidth="1.600" />
          <rect x="5.500" y="12.500" width="13" height="6" fill="#9ba1a6" stroke="#4d5358" strokeWidth="1.400" />
        </Icon>
      </button>
      <button aria-label="Pan" className="ml-[15px]">
        <Icon w={24} h={24}>
          <path d="M9 23.500C6 20 3 16 1 13.500c-1-2 1-3 2.500-1.500l3.500 3L5 5c-.5-2.500 2-3 2.700-1L10 10V2c0-2.500 3-2.500 3 0l.5 8 2-7.500c.8-2.300 3.300-1.500 2.800.8L17 11.500l3-5c1.200-2 3.500-1 2.700 1.200L20 15c-.5 4-1.500 6.500-3 8.500z" fill="#eef0f1" stroke="#3f464b" strokeWidth="1.400" strokeLinejoin="round" />
        </Icon>
      </button>
      <button aria-label="Zoom" className="ml-[15px]">
        <Icon w={25} h={24}>
          <path d="M12 15l7 6" stroke="#333" strokeWidth="4" strokeLinecap="round" />
          <circle cx="8" cy="10.500" r="7.200" fill="#dff0f0" stroke="#4d5a60" strokeWidth="1.700" />
          <path d="M18 4.500h7M21.500 1v7M18 10.500h7" stroke="#333" strokeWidth="1.500" />
        </Icon>
      </button>
      <button aria-label="Fit" className="ml-[14px] flex items-center gap-[7px]">
        <Icon w={25} h={24}>
          <path d="M1 1h23v22H1z" stroke="#444" strokeWidth="1.500" strokeDasharray="3 3" />
          <path d="M17 17l6 5.500" stroke="#333" strokeWidth="4.500" />
          <circle cx="11" cy="10.500" r="9.800" fill="#dff0f0" stroke="#4d5a60" strokeWidth="1.600" />
        </Icon>
        <Caret />
      </button>
      <button aria-label="Display settings" className="ml-2 flex items-center gap-0.5">
        <Icon w={24} h={24}>
          <rect x=".8" y=".8" width="22.400" height="18" rx="1" fill="#eee" stroke="#555" strokeWidth="1.600" />
          <rect x="4" y="4" width="16" height="11.500" fill="#9dbce4" stroke="#3d5a8a" strokeWidth="1.500" />
          <path d="M9 19v3H6.500v1.500h11V22H15v-3" fill="#ccc" stroke="#555" />
        </Icon>
        <Caret />
      </button>
      <button aria-label="Grid and snaps" className="ml-2.5 flex items-center gap-[3px]">
        <Icon w={24} h={24}>
          <rect x=".8" y=".8" width="22.400" height="22.400" fill="#f6f6f6" stroke="#444" strokeWidth="1.500" />
          <path d="M1 5.500h22M1 10h22M1 14.500h22M1 19h22M5.500 1v22M10 1v22M14.500 1v22M19 1v22" stroke="#6a6f7a" strokeWidth="1.200" />
        </Icon>
        <Caret />
      </button>
      <button aria-label="Viewports" className="ml-2.5 flex items-center gap-[3px]">
        <Icon w={24} h={20}>
          <g fill="#a9c4ea" stroke="#3d5a92" strokeWidth="1.600">
            <rect x="1" y="1" width="10.500" height="8.500" rx="1" />
            <rect x="12.500" y="1" width="10.500" height="8.500" rx="1" />
            <rect x="1" y="10.500" width="10.500" height="8.500" rx="1" />
            <rect x="12.500" y="10.500" width="10.500" height="8.500" rx="1" />
          </g>
          <path d="M4 4h4.500v2.500H4zM15.500 4H20v2.500h-4.500zM4 13.500h4.500V16H4zM15.500 13.500H20V16h-4.500z" stroke="#6f92c8" />
        </Icon>
        <Caret />
      </button>
    </nav>
  );
}

function Timeline() {
  const D = "#4b4b4d";
  return (
    <footer className="flex h-[66px] items-center border-t-2 border-[#cfcfcf] bg-[#f0f0f0] pl-4 pr-[18px]">
      <div className="flex items-center gap-[17px] pt-1.5">
        <button aria-label="Go to start"><Icon w={20} h={24}><path d="M.5 1.500H3v21H.5zM18.500 2v20L4 12z" fill={D} /></Icon></button>
        <button aria-label="Step back"><Icon w={20} h={24}><path d="M14 2v20L0 12zM15.500 7h3v10h-3z" fill={D} /></Icon></button>
        <button aria-label="Play"><Icon w={20} h={24}><path d="M1 0l18 12L1 24z" fill={D} /></Icon></button>
        <button aria-label="Step forward"><Icon w={20} h={24}><path d="M5 2v20l14.500-10zM.5 7h3v10h-3z" fill={D} /></Icon></button>
        <button aria-label="Go to end"><Icon w={20} h={24}><path d="M2 2v20l14.500-10zM16.500 1.500H19v21h-2.500z" fill={D} /></Icon></button>
      </div>
      <button aria-label="Sketch feature" className="ml-[29px] pt-1">
        <Icon w={46} h={48}>
          <path d="M18 39h3v9h-3z" fill="#c2c2c2" />
          <rect x="0" y="3" width="36" height="36" rx="1.500" fill="#0696d7" />
          <path d="M11 11.500h12M8 15v11M26.500 15v6M11 29.500h8" stroke="#4f6470" strokeWidth="1.800" />
          <path d="M6.500 10h3v3h-3zM25 10h3v3h-3zM6.500 28h3v3h-3z" fill="#1184e8" />
          <path d="M20 29.500l6-6 2.500 2.500-6 5.500-3 .5z" fill="#ffc94d" />
          <path d="M25.500 23.500l2.500-2 3 2-2.500 3z" fill="#d8484f" />
          <path d="M27 0h18v5l-7.500 8V47h-3V13L27 5z" fill="#636363" />
        </Icon>
      </button>
      <button aria-label="Settings" className="ml-auto pt-1.5"><Gear /></button>
    </footer>
  );
}

export default function App() {
  return (
    <div className="flex min-h-screen flex-col bg-[#f0f0f0] font-['Liberation_Sans',Arial,sans-serif]">
      <TitleBar />
      <DocumentBar />
      <Ribbon />
      <main className="relative flex flex-1 flex-col overflow-hidden bg-white">
        <Sketch />
        <ViewCube />
        <Browser />
        <div className="relative mt-auto grid grid-cols-[1fr_auto_1fr] items-center pb-1.5">
          <section className="ml-1.5 flex h-[38px] w-[450px] items-center border-x-2 border-b-2 border-[#cacaca] bg-[#f0f0f0] pl-9">
            <h2 className="text-[15px] text-[#6a6a6a]">COMMENTS</h2>
            <button aria-label="Expand comments" className="ml-auto mr-2.5">
              <Icon w={14} h={14}><circle cx="7" cy="7" r="7" fill="#333" /><path d="M3 7h8M7 3v8" stroke="#eee" strokeWidth="1.500" /></Icon>
            </button>
            <Handle />
          </section>
          <NavBar />
          <p className="pr-[30px] text-right text-[17px] font-bold text-[#444]">1 Sketch Line | Length : 70.00 mm</p>
        </div>
      </main>
      <Timeline />
    </div>
  );
}
